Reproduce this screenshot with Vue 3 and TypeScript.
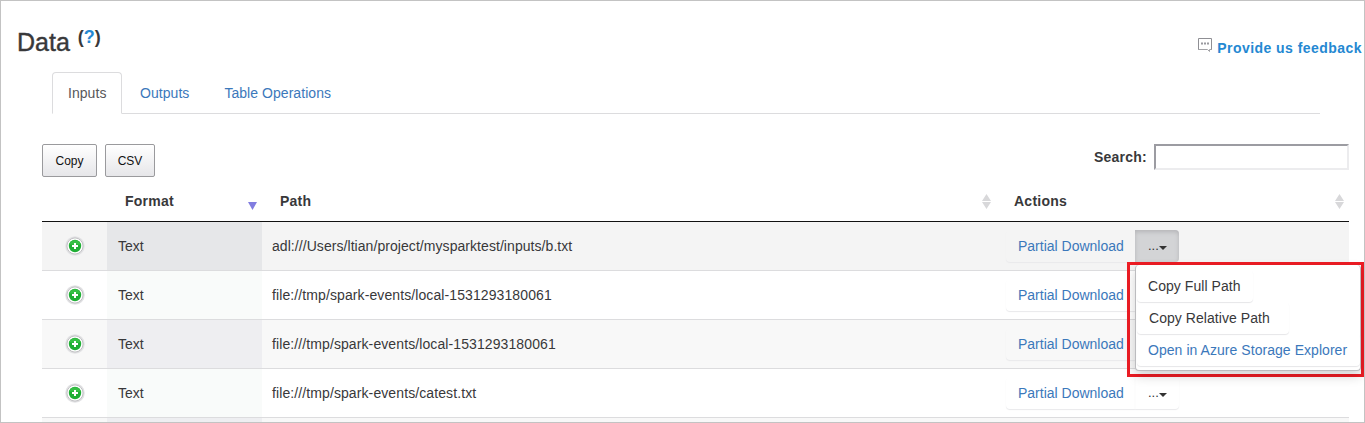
<script setup lang="ts">
import { ref } from 'vue'

interface Row {
  format: string
  path: string
  tone: string
}

const tabs = ['Inputs', 'Outputs', 'Table Operations']
const activeTab = ref('Inputs')
const search = ref('')
const openRow = ref(0)

// The open menu spans the two rows below its own, whose menu buttons stay hidden.
const isCovered = (i: number): boolean => i > openRow.value && i <= openRow.value + 2

const rows: Row[] = [
  { format: 'Text', path: 'adl:///Users/ltian/project/mysparktest/inputs/b.txt', tone: 'hover' },
  { format: 'Text', path: 'file://tmp/spark-events/local-1531293180061', tone: 'even' },
  { format: 'Text', path: 'file:///tmp/spark-events/local-1531293180061', tone: 'odd' },
  { format: 'Text', path: 'file:///tmp/spark-events/catest.txt', tone: 'even' },
]
</script>

<template>
  <main class="page">
    <header class="top">
      <h1 class="title">Data <span class="help">(<a>?</a>)</span></h1>
      <a class="feedback">
        <svg class="bubble" width="15" height="15" viewBox="0 0 15 15" fill="none">
          <path d="M.5 11V.5H13.5V11" stroke="#8f8f94" />
          <path d="M0 11.5H9.5L11.5 13.5V11.5H14" stroke="#a2a2a6" />
          <path d="M3 5.5H5M6 5.5H8M9 5.5H11" stroke="#9a9a9f" stroke-width="2" />
        </svg>
        <span>Provide us feedback</span>
      </a>
    </header>

    <nav class="tabs">
      <a
        v-for="tab in tabs"
        :key="tab"
        class="tab"
        :class="{ active: tab === activeTab }"
        @click="activeTab = tab"
      >{{ tab }}</a>
    </nav>

    <section class="toolbar">
      <div class="tools">
        <button class="tool copy">Copy</button>
        <button class="tool csv">CSV</button>
      </div>
      <label class="search"><span>Search:</span><input v-model="search" type="text" /></label>
    </section>

    <section class="table">
      <div class="row head">
        <div></div>
        <div class="th">
          <span>Format</span>
          <svg class="desc" width="9" height="8" viewBox="0 0 9 8"><path d="M0 0H9L4.5 8Z" fill="#817de0" /></svg>
        </div>
        <div class="th">
          <span>Path</span>
          <svg class="sort" width="9" height="15" viewBox="0 0 9 15"><path d="M4.5 0L9 7H0ZM0 8H9L4.5 15Z" fill="#d8d8da" /></svg>
        </div>
        <div class="th">
          <span>Actions</span>
          <svg class="sort" width="9" height="15" viewBox="0 0 9 15"><path d="M4.5 0L9 7H0ZM0 8H9L4.5 15Z" fill="#d8d8da" /></svg>
        </div>
      </div>

      <div v-for="(row, i) in rows" :key="i" class="row body" :class="row.tone">
        <div class="expand">
          <svg width="20" height="20" viewBox="0 0 20 20">
            <circle cx="10" cy="10" r="9" fill="#fff" stroke="#e3e3e5" stroke-width="1.6" />
            <circle cx="10" cy="10" r="8.1" fill="#fff" stroke="#bdbdc0" stroke-width="1" />
            <circle cx="10" cy="10" r="6.2" fill="#1fae35" />
            <path d="M4.1 8.5A6.2 6.2 0 0 1 15.9 8.5Z" fill="#36bf45" />
            <path d="M10 7V13M7 10H13" stroke="#fff" stroke-width="2" />
          </svg>
        </div>
        <div class="format">{{ row.format }}</div>
        <div class="path">{{ row.path }}</div>
        <div class="actions">
          <a class="btn download">Partial Download</a>
          <button v-if="!isCovered(i)" class="btn more" :class="{ open: i === openRow }">
            <span>...</span>
            <svg width="8" height="4" viewBox="0 0 8 4"><path d="M0 0H8L4 4Z" fill="#333" /></svg>
          </button>
          <div v-if="i === openRow" class="highlight">
            <div class="menu">
              <a class="item full">Copy Full Path</a>
              <a class="item relative">Copy Relative Path</a>
              <a class="item link">Open in Azure Storage Explorer</a>
            </div>
          </div>
        </div>
      </div>
      <div class="row body odd">
        <div></div>
        <div class="format"></div>
      </div>
    </section>
  </main>
</template>

<style>
body {
  margin: 0;
  overflow: hidden;
}
</style>

<style scoped>
* {
  box-sizing: border-box;
}

.page {
  width: 1365px;
  height: 423px;
  overflow: hidden;
  border: 1px solid #c3c3c3;
  background: #fff;
  color: #38383a;
  font: 14px/20px "Liberation Sans", Arial, sans-serif;
}

.top {
  display: flex;
  justify-content: space-between;
  height: 71px;
  padding: 25px 2px 0 16px;
}

.title {
  display: flex;
  gap: 8px;
  height: 30px;
  margin: 0;
  font-size: 25px;
  font-weight: 400;
  line-height: 32px;
  white-space: nowrap;
  -webkit-text-stroke: 0.4px #38383a;
}

.help {
  font-size: 18px;
  font-weight: 700;
  line-height: 22px;
  -webkit-text-stroke: 0;
}

.help a {
  color: #2488d2;
}

.feedback {
  display: flex;
  gap: 4px;
  height: 24px;
  margin-top: 12px;
  color: #2488d2;
  font-weight: 700;
  letter-spacing: 0.45px;
}

.bubble {
  flex: none;
}

.tabs {
  display: flex;
  width: 1268px;
  height: 42px;
  margin-left: 51px;
  border-bottom: 1px solid #dcdcde;
}

.tab {
  height: 42px;
  margin-right: 2px;
  padding: 10px 15px;
  border: 1px solid transparent;
  color: #3b78bb;
  letter-spacing: 0.05px;
  white-space: nowrap;
}

.tab:first-child {
  width: 70px;
  padding-right: 0;
}

.tab + .tab + .tab {
  margin-left: 1px;
}

.tab.active {
  border-color: #dcdcde #dcdcde #fff;
  border-radius: 4px 4px 0 0;
  background: #fff;
  color: #58585a;
}

.toolbar {
  display: flex;
  justify-content: space-between;
  width: 1307px;
  height: 66px;
  padding-top: 30px;
  margin-left: 41px;
}

.tools {
  display: flex;
  gap: 8px;
}

.tool {
  height: 33px;
  padding: 0;
  border: 1px solid #9a9a9d;
  border-radius: 2px;
  background: linear-gradient(#fff, #e6e6e9);
  color: #111;
  font: 12px/20px "Liberation Sans", Arial, sans-serif;
}

.copy {
  width: 55px;
}

.csv {
  width: 50px;
}

.search {
  display: flex;
  gap: 7px;
  font-weight: 700;
  letter-spacing: 0.25px;
  line-height: 26px;
}

.search input {
  width: 195px;
  height: 26px;
  padding: 0 4px;
  border: 2px solid;
  border-color: #9c9ca2 #ececee #ececee #9c9ca2;
  outline: none;
}

.table {
  width: 1307px;
  margin-left: 41px;
}

.row {
  display: grid;
  grid-template-columns: 65px 155px 734px 353px;
}

.head {
  height: 42px;
  border-bottom: 1px solid #111;
  font-weight: 700;
  letter-spacing: 0.25px;
}

.th {
  display: flex;
  justify-content: space-between;
  padding: 11px 5px 0 18px;
}

.desc {
  margin-top: 11px;
}

.sort {
  margin-top: 3px;
}

.body {
  height: 49px;
  border-bottom: 1px solid #dcdcde;
  line-height: 49px;
}

.body > div {
  height: 48px;
}

.hover {
  background: #f4f4f4;
}

.odd {
  background: #f8f8f8;
}

.expand {
  display: flex;
  padding: 14px 0 0 23px;
}

.format {
  padding-left: 11px;
  background: #f9fbfa;
}

.hover .format {
  background: #e6e7e9;
}

.odd .format {
  background: #eeeef1;
}

.path {
  padding-left: 10px;
  letter-spacing: 0.1px;
}

.hover .path {
  letter-spacing: 0.06px;
}

.actions {
  position: relative;
  display: flex;
  padding: 8px 0 0 10px;
}

.btn {
  height: 32px;
  border: 0;
  border-radius: 4px;
  box-shadow: 0 1px 1px #e9e9eb;
  line-height: 32px;
}

.download {
  width: 129px;
  padding-left: 12px;
  border-radius: 4px 0 0 4px;
  color: #3b78bb;
}

.more {
  display: flex;
  align-items: center;
  width: 44px;
  padding: 0 0 0 13px;
  border-radius: 0 4px 4px 0;
  background: transparent;
  color: #333;
  font: 13px/32px "Liberation Sans", Arial, sans-serif;
}

.more svg {
  margin-top: 3px;
}

.more.open {
  background: #d3d4d6;
  box-shadow: inset 0 2px 4px #b5b5b8;
}

.highlight {
  position: absolute;
  top: 40px;
  left: 131px;
  z-index: 1;
  width: 237px;
  height: 115px;
  border: 3px solid #ed1c24;
}

.menu {
  display: flex;
  flex-direction: column;
  align-items: flex-start;
  width: 226px;
  height: 106px;
  margin: 0 0 0 5px;
  padding: 5px 0 5px 1px;
  border: 1px solid #bcbcbf;
  border-top: 0;
  border-radius: 4px;
  background: #fff;
  box-shadow: 0 5px 12px rgba(0, 0, 0, 0.18);
}

.item {
  height: 32px;
  padding: 0 12px 0 11px;
  border-radius: 4px;
  box-shadow: 0 1px 1px #e6e6e8;
  line-height: 32px;
  letter-spacing: 0.05px;
  white-space: nowrap;
}

.relative {
  width: 152px;
  padding-left: 12px;
}

.link {
  width: 223px;
  color: #3b78bb;
}
</style>
